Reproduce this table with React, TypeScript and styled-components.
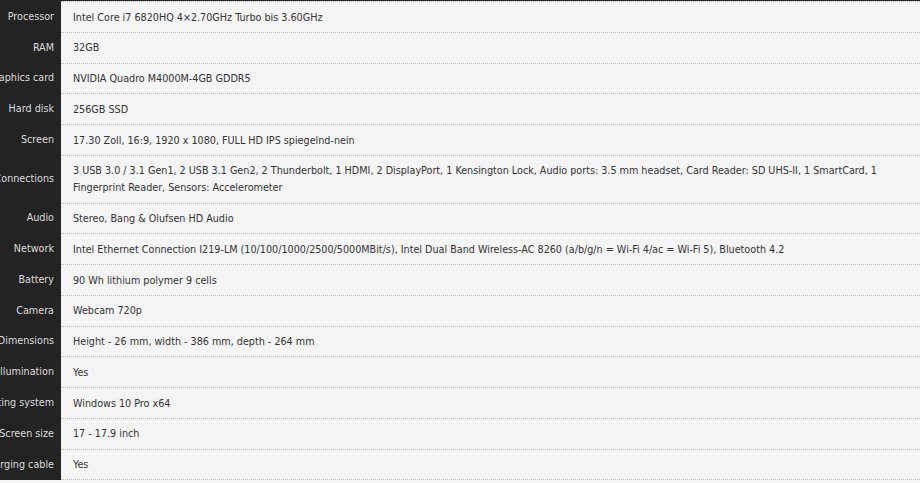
import React from "react";
import styled, { createGlobalStyle } from "styled-components";

const Global = createGlobalStyle`
  html, body { margin: 0; padding: 0; background: #f4f4f4; }
  body { overflow: hidden; }
`;

const Table = styled.div`
  display: grid;
  grid-template-columns: 61px 1fr;
  font-family: "DejaVu Sans Condensed", "DejaVu Sans", sans-serif;
  font-size: 10.7px;
  line-height: 17px;
  padding-top: 1px;
  background: #232323;
`;

const Label = styled.div`
  display: flex;
  justify-content: flex-end;
  align-items: center;
  overflow: hidden;
  white-space: nowrap;
  background: #232323;
  color: #dcdcdc;
  padding-right: 7px;
`;

const Value = styled.div<{ $last?: boolean }>`
  background: #f4f4f4;
  color: #333;
  padding: 6.5px 12px 6.25px 12px;
  border-top: 1px dotted #b8b8b8;
  border-bottom: ${(p) => (p.$last ? "1px dotted #b8b8b8" : "none")};
`;

const rows: [string, string][] = [
  ["Processor", "Intel Core i7 6820HQ 4×2.70GHz Turbo bis 3.60GHz"],
  ["RAM", "32GB"],
  ["Graphics card", "NVIDIA Quadro M4000M-4GB GDDR5"],
  ["Hard disk", "256GB SSD"],
  ["Screen", "17.30 Zoll, 16:9, 1920 x 1080, FULL HD IPS spiegelnd-nein"],
  [
    "Connections",
    "3 USB 3.0 / 3.1 Gen1, 2 USB 3.1 Gen2, 2 Thunderbolt, 1 HDMI, 2 DisplayPort, 1 Kensington Lock, Audio ports: 3.5 mm headset, Card Reader: SD UHS-II, 1 SmartCard, 1 Fingerprint Reader, Sensors: Accelerometer",
  ],
  ["Audio", "Stereo, Bang & Olufsen HD Audio"],
  [
    "Network",
    "Intel Ethernet Connection I219-LM (10/100/1000/2500/5000MBit/s), Intel Dual Band Wireless-AC 8260 (a/b/g/n = Wi-Fi 4/ac = Wi-Fi 5), Bluetooth 4.2",
  ],
  ["Battery", "90 Wh lithium polymer 9 cells"],
  ["Camera", "Webcam 720p"],
  ["Dimensions", "Height - 26 mm, width - 386 mm, depth - 264 mm"],
  ["Illumination", "Yes"],
  ["Operating system", "Windows 10 Pro x64"],
  ["Screen size", "17 - 17.9 inch"],
  ["Charging cable", "Yes"],
];

export default function App() {
  return (
    <>
      <Global />
      <Table>
        {rows.map(([k, v], i) => (
          <React.Fragment key={k}>
            <Label>{k}</Label>
            <Value $last={i === rows.length - 1}>{v}</Value>
          </React.Fragment>
        ))}
      </Table>
    </>
  );
}
